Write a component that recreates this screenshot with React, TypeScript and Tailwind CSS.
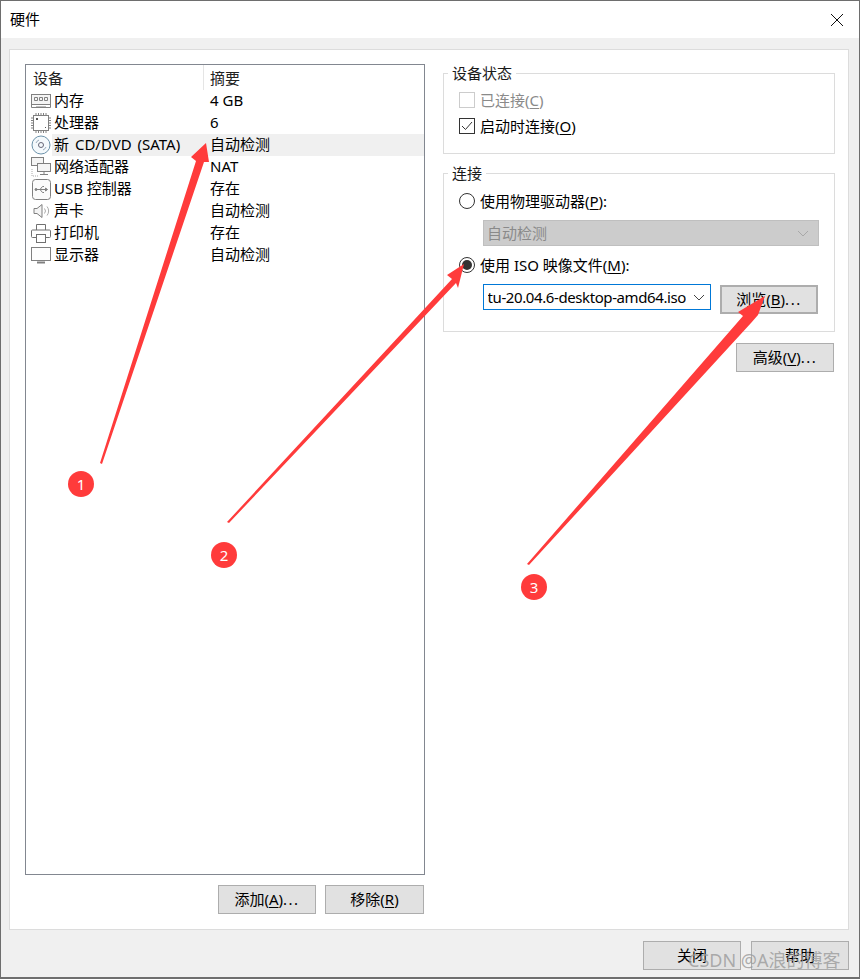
import type { ReactNode } from 'react';

const FONT = "font-['Noto_Sans','Noto_Sans_CJK_SC',sans-serif]";

function MemoryIcon() {
  return (
    <svg width="20" height="14" viewBox="0 0 20 14" fill="none" stroke="#808080">
      <rect x="0.500" y="0.500" width="19" height="10" fill="#f4f4f4" />
      <path d="M3.500 3.500h3v3h-3zM8.500 3.500h3v3h-3zM13.500 3.500h3v3h-3z" />
      <path d="M0.500 10.500v3h19v-3M5 13h10" />
    </svg>
  );
}

function CpuIcon() {
  return (
    <svg width="20" height="20" viewBox="0 0 20 20" fill="none" stroke="#808080">
      <rect x="2.500" y="2.500" width="15" height="15" />
      <path d="M5 0v2M7.500 0v2M10 0v2M12.500 0v2M15 0v2M5 18v2M7.500 18v2M10 18v2M12.500 18v2M15 18v2M0 5h2M0 7.500h2M0 10h2M0 12.500h2M0 15h2M18 5h2M18 7.500h2M18 10h2M18 12.500h2M18 15h2" strokeDasharray="1 0" />
      <path d="M5 5h2v2H5zM14 14h1v1h-1z" fill="#555" stroke="none" />
    </svg>
  );
}

function DiscIcon() {
  return (
    <svg width="20" height="20" viewBox="0 0 20 20" fill="none">
      <circle cx="10" cy="10" r="9" fill="#f4f9fc" stroke="#6d93ab" />
      <circle cx="10" cy="10" r="2.500" stroke="#667" />
      <path d="M5 8a5.500 5.500 0 0 1 3-3M15 12a5.500 5.500 0 0 1-3 3" stroke="#9ab" />
    </svg>
  );
}

function NetworkIcon() {
  return (
    <svg width="20" height="20" viewBox="0 0 20 20" fill="none" stroke="#808080">
      <rect x="0.500" y="0.500" width="12" height="8" fill="#f4f4f4" />
      <rect x="6.500" y="6.500" width="13" height="8" fill="#f4f4f4" />
      <path d="M13 14.500v3M9 17.500h8" />
      <path d="M1 12v7h6" strokeDasharray="1 1" stroke="#aaa" />
    </svg>
  );
}

function UsbIcon() {
  return (
    <svg width="19" height="21" viewBox="0 0 19 21" fill="none" stroke="#808080">
      <rect x="0.500" y="0.500" width="18" height="20" rx="3" fill="#fbfbfb" />
      <path d="M4 10.500h10M8 10.500l2.500-3H12M8 10.500l2.500 3H12" />
      <path d="M15.500 10.500l-2-1.500v3z" fill="#808080" />
      <circle cx="4" cy="10.500" r="1" fill="#808080" />
    </svg>
  );
}

function SoundIcon() {
  return (
    <svg width="18" height="16" viewBox="0 0 18 16" fill="none" stroke="#808080">
      <path d="M1 5.500h3L9 1.500v13L4 10.500H1z" fill="#f4f4f4" />
      <path d="M11.500 5.500a4 4 0 0 1 0 5M14 3.500a7 7 0 0 1 0 9" stroke="#aaa" />
    </svg>
  );
}

function PrinterIcon() {
  return (
    <svg width="20" height="19" viewBox="0 0 20 19" fill="none" stroke="#707070">
      <path d="M5.500 6V0.500h9V6" />
      <path d="M5 13.500H1.500a1 1 0 0 1-1-1V7a1 1 0 0 1 1-1h17a1 1 0 0 1 1 1v5.500a1 1 0 0 1-1 1H15" />
      <rect x="5.500" y="10.500" width="9" height="8" fill="#fff" />
    </svg>
  );
}

function MonitorIcon() {
  return (
    <svg width="20" height="17" viewBox="0 0 20 17" fill="none" stroke="#808080">
      <rect x="0.500" y="0.500" width="19" height="13" fill="#fdfdfd" />
      <path d="M6 15.500h8" strokeWidth="2" />
    </svg>
  );
}

const devices = [
  { icon: <MemoryIcon />, name: '内存', summary: '4 GB' },
  { icon: <CpuIcon />, name: '处理器', summary: '6' },
  { icon: <DiscIcon />, name: '新 CD/DVD (SATA)', summary: '自动检测', selected: true },
  { icon: <NetworkIcon />, name: '网络适配器', summary: 'NAT' },
  { icon: <UsbIcon />, name: 'USB 控制器', summary: '存在' },
  { icon: <SoundIcon />, name: '声卡', summary: '自动检测' },
  { icon: <PrinterIcon />, name: '打印机', summary: '存在' },
  { icon: <MonitorIcon />, name: '显示器', summary: '自动检测' },
];

function Key({ children }: { children: ReactNode }) {
  return <span className="underline underline-offset-2">{children}</span>;
}

function Dots() {
  return <span className="tracking-[1.500px]">...</span>;
}

function Button({ children, className = '' }: { children: ReactNode; className?: string }) {
  return (
    <button
      type="button"
      className={`flex h-[29px] w-[98px] items-center justify-center border border-[#adadad] bg-[#e1e1e1] text-[15px] text-black ${className}`}
    >
      {children}
    </button>
  );
}

function GroupBox({ title, className, children }: { title: string; className: string; children: ReactNode }) {
  return (
    <fieldset className={`w-[392px] border border-[#dcdcdc] ${className}`}>
      <div className="absolute -mt-[11px] ml-[4px] bg-white px-[4px] text-[15px] leading-[20px] text-[#1a1a1a]">
        {title}
      </div>
      {children}
    </fieldset>
  );
}

function Radio({ checked }: { checked?: boolean }) {
  return (
    <span className="flex h-[16px] w-[16px] shrink-0 items-center justify-center rounded-full border border-[#333] bg-white">
      {checked && <span className="h-[10px] w-[10px] rounded-full bg-[#333]" />}
    </span>
  );
}

function Chevron({ color }: { color: string }) {
  return (
    <svg width="12" height="7" viewBox="0 0 12 7" fill="none" stroke={color}>
      <path d="M1 1l5 5 5-5" />
    </svg>
  );
}

function DeviceList() {
  return (
    <div className="h-[811px] w-[400px] border border-[#828790] bg-white">
      <div className="flex h-[25px] text-[15px] leading-[26px] text-[#222]">
        <div className="w-[178px] border-r border-[#e5e5e5] pl-[7px]">设备</div>
        <div className="pl-[6px]">摘要</div>
      </div>
      <div>
        {devices.map((d) => (
          <div key={d.name} className="flex h-[22px] items-center text-[15px] leading-[20px] text-black">
            <div className="flex w-[26px] shrink-0 justify-end pr-[1px]">{d.icon}</div>
            <div className={`flex h-full flex-1 ${d.selected ? 'bg-[#f0f0f0]' : ''}`}>
              <div className={`w-[158px] pl-[2px] whitespace-nowrap ${d.selected ? '[word-spacing:2px]' : ''}`}>{d.name}</div>
              <div>{d.summary}</div>
            </div>
          </div>
        ))}
      </div>
    </div>
  );
}

function Annotations() {
  return (
    <svg className="pointer-events-none absolute top-0 left-0" width="860" height="979">
      <g fill="#ff3b3b">
        <polygon points="99,462 195,160 190,156 205,142 208,161 203,161 101,463" />
        <polygon points="226,521 451,278 446,274 463,263 457,287 455,282 228,522" />
        <polygon points="526,563 742,315 737,311 764,295 757,314 750,322 528,564" />
        <circle cx="80" cy="483" r="13" />
        <circle cx="223" cy="554" r="13" />
        <circle cx="533" cy="586" r="13" />
      </g>
      <g fill="#fff" fontSize="15" textAnchor="middle" fontFamily="Noto Sans, sans-serif">
        <text x="80" y="489">1</text>
        <text x="223" y="560">2</text>
        <text x="533" y="592">3</text>
      </g>
    </svg>
  );
}

export default function App() {
  return (
    <div className={`relative flex h-[979px] w-[860px] flex-col border-x border-t border-b-2 border-[#6e6e6e] bg-[#f0f0f0] ${FONT}`}>
      {/* title bar */}
      <div className="flex h-[37px] shrink-0 items-center justify-between bg-white pr-[15px] pl-[9px] text-[15px] text-black">
        <span>硬件</span>
        <svg width="14" height="14" viewBox="0 0 14 14" stroke="#111" fill="none">
          <path d="M1 1l12 12M13 1L1 13" />
        </svg>
      </div>

      <div className="mx-[8px] mt-[11px] flex h-[881px] w-[840px] shrink-0 border border-[#dcdcdc] bg-white pt-[14px] pl-[15px]">
        {/* left column */}
        <div className="flex w-[418px] shrink-0 flex-col">
          <DeviceList />
          <div className="mt-[10px] flex w-[399px] justify-end gap-[9px]">
            <Button>添加(<Key>A</Key>)<Dots /></Button>
            <Button className="w-[99px]">移除(<Key>R</Key>)</Button>
          </div>
        </div>

        {/* right column */}
        <div className="flex flex-col pt-[9px]">
          <GroupBox title="设备状态" className="h-[81px]">
            <div className="flex flex-col pt-[16px] pl-[15px] text-[15px]">
              <label className="flex h-[20px] items-center gap-[5px] text-[#8a8a8a]">
                <span className="h-[16px] w-[16px] border border-[#cccccc] bg-white" />
                <span>已连接(<Key>C</Key>)</span>
              </label>
              <label className="mt-[6px] flex h-[20px] items-center gap-[5px] text-black">
                <span className="flex h-[16px] w-[16px] items-center justify-center border border-[#333] bg-white">
                  <svg width="12" height="10" viewBox="0 0 12 10" fill="none" stroke="#333">
                    <path d="M1 5l3.500 3.500L11 1" />
                  </svg>
                </span>
                <span>启动时连接(<Key>O</Key>)</span>
              </label>
            </div>
          </GroupBox>

          <GroupBox title="连接" className="mt-[19px] h-[159px]">
            <div className="flex flex-col pt-[17px] pl-[15px] text-[15px] text-black">
              <label className="flex h-[20px] items-center gap-[5px]">
                <Radio />
                <span>使用物理驱动器(<Key>P</Key>):</span>
              </label>
              <div className="mt-[9px] ml-[24px] flex h-[26px] w-[336px] items-center justify-between border border-[#bfbfbf] bg-[#cccccc] pr-[9px] pl-[3px] text-[#8a8a8a]">
                <span>自动检测</span>
                <Chevron color="#a8a8a8" />
              </div>
              <label className="mt-[9px] flex h-[20px] items-center gap-[5px]">
                <Radio checked />
                <span>使用 ISO 映像文件(<Key>M</Key>):</span>
              </label>
              <div className="mt-[9px] ml-[24px] flex items-start gap-[9px]">
                <div className="flex h-[26px] w-[228px] items-center justify-between border border-[#0078d7] bg-white pr-[5px] pl-[4px]">
                  <span className="flex w-[198px] justify-end overflow-hidden tracking-[-0.400px] whitespace-nowrap">
                    <span className="shrink-0">ubuntu-20.04.6-desktop-amd64.iso</span>
                  </span>
                  <Chevron color="#444" />
                </div>
                <Button className="mt-[1px] border-2 border-[#0078d7]">浏览(<Key>B</Key>)<Dots /></Button>
              </div>
            </div>
          </GroupBox>

          <div className="mt-[11px] flex w-[391px] justify-end">
            <Button>高级(<Key>V</Key>)<Dots /></Button>
          </div>
        </div>
      </div>

      {/* footer */}
      <div className="mt-[11px] flex w-[848px] justify-end gap-[10px]">
        <Button className="h-[26px]">关闭</Button>
        <Button className="h-[26px]">帮助</Button>
      </div>

      <Annotations />
      <div className="absolute top-[947px] left-[687px] text-[18px] leading-[24px] whitespace-nowrap text-[#9a9a9a]/80">
        CSDN @A浪的博客
      </div>
    </div>
  );
}
